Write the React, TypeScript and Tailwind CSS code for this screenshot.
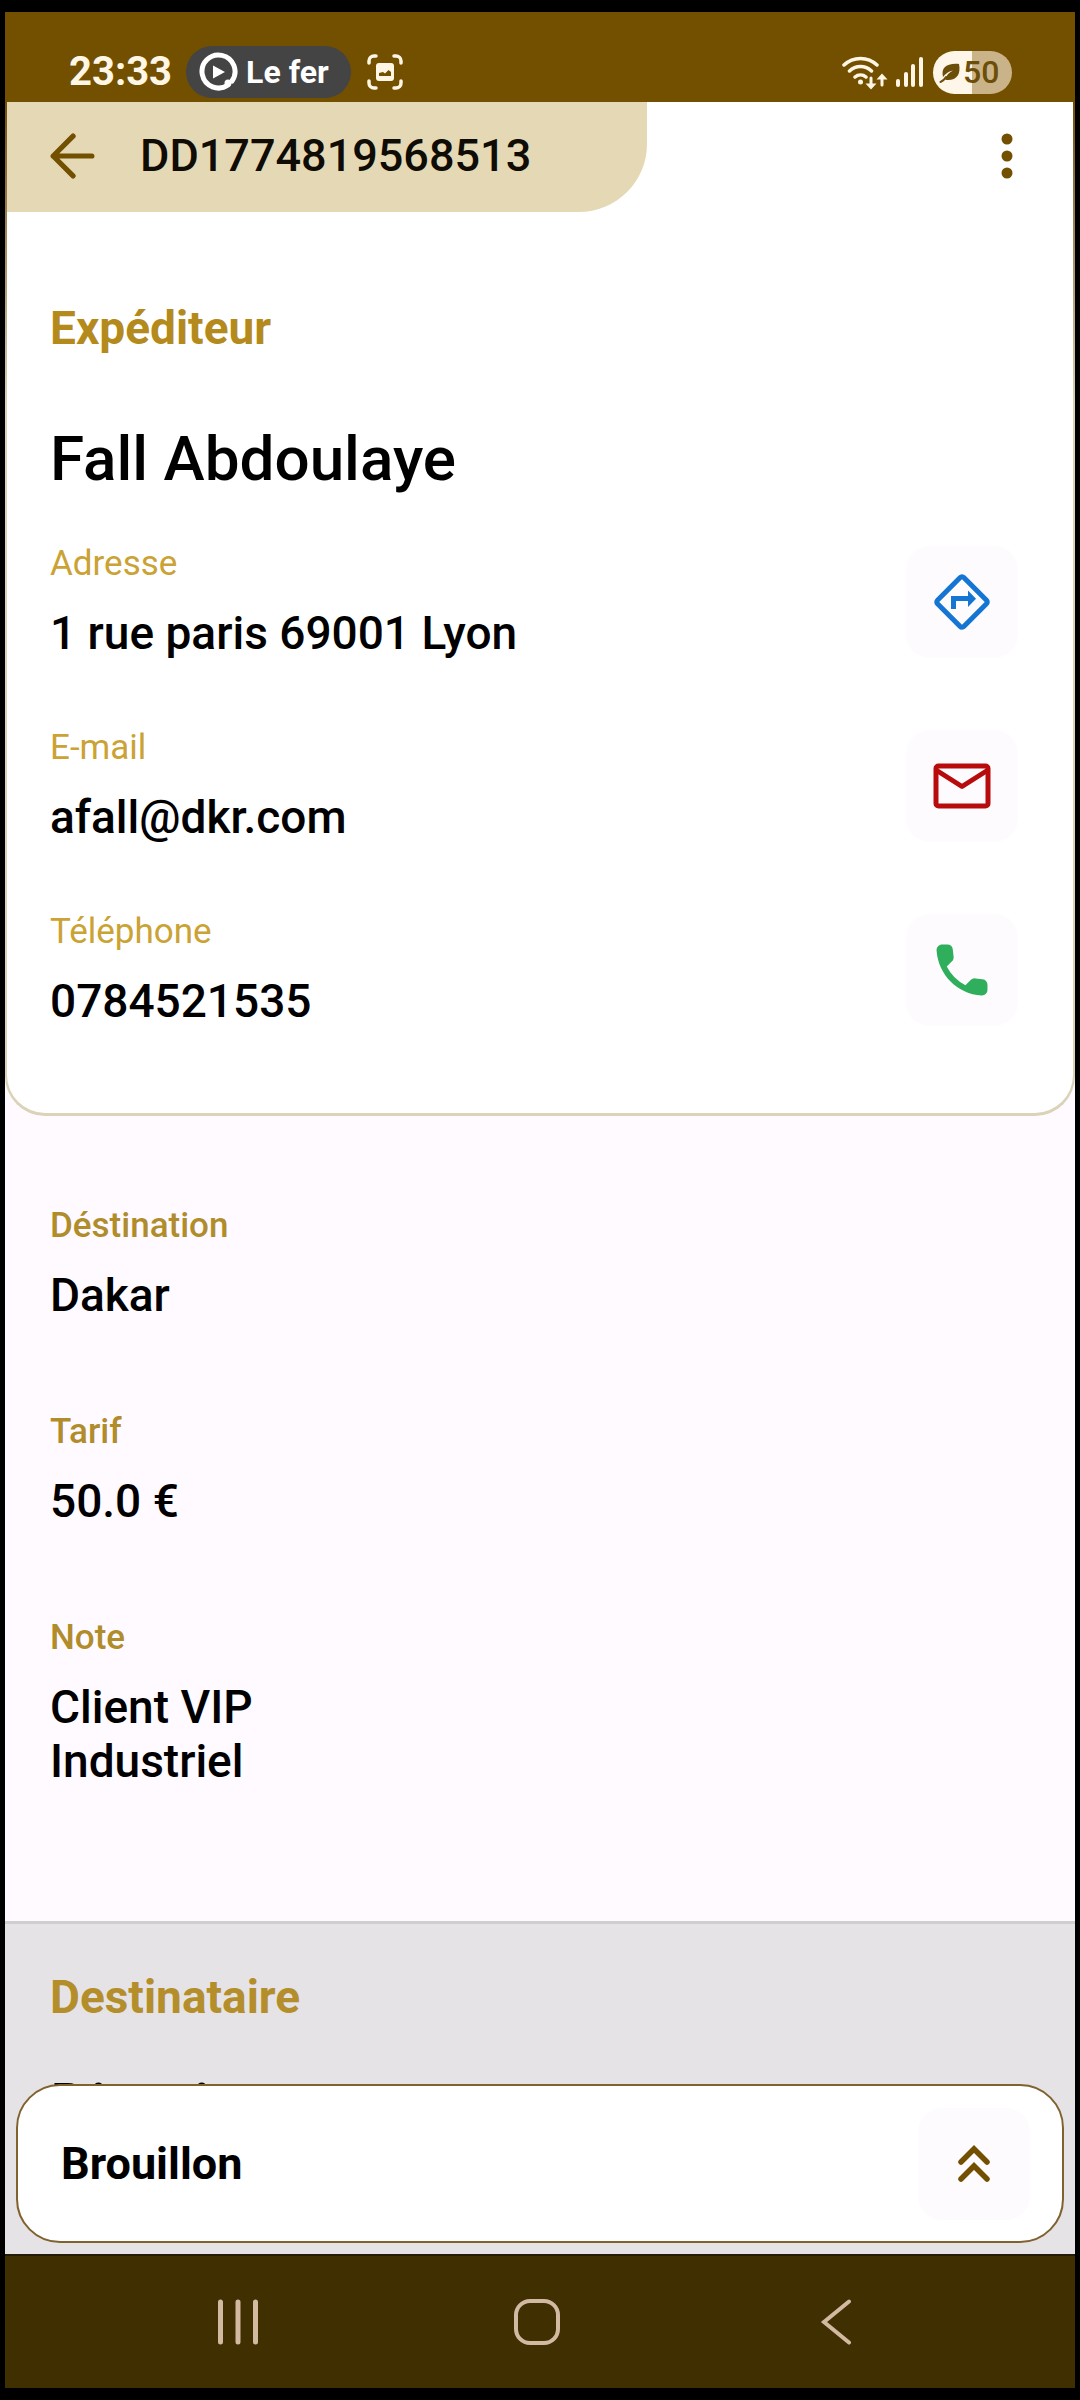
import { ReactNode, useState } from "react";

interface Contact {
  label: string;
  value: string;
  action: string;
  href: string;
  icon: ReactNode;
}

interface Detail {
  label: string;
  value: string;
}

function DirectionsIcon() {
  return (
    <svg viewBox="0 0 58 58" className="size-[58px] text-[#1476d2]" fill="none" stroke="currentColor" strokeWidth="5" strokeLinejoin="round">
      <path d="M27.200 4.500a2.500 2.500 0 0 1 3.600 0L53.500 27.200a2.500 2.500 0 0 1 0 3.600L30.800 53.500a2.500 2.500 0 0 1-3.600 0L4.500 30.800a2.500 2.500 0 0 1 0-3.600z" />
      <path d="M18 36V23h17v-5.500l8 8.200-8 8.300v-6H23v8z" fill="currentColor" stroke="none" />
    </svg>
  );
}

function MailIcon() {
  return (
    <svg viewBox="0 0 58 46" className="h-[46px] w-[58px] text-[#b80c0c]" fill="none" stroke="currentColor" strokeWidth="5" strokeLinejoin="round">
      <rect x="3" y="3" width="52" height="40" rx="2.500" />
      <path d="M3 7l26 16.500L55 7" />
    </svg>
  );
}

function PhoneIcon() {
  return (
    <svg viewBox="0 0 24 24" className="size-[68px] text-[#2fae5b]" fill="currentColor">
      <path d="M19.230 15.260l-2.540-.29a1.990 1.990 0 0 0-1.640.57l-1.840 1.840a15.045 15.045 0 0 1-6.590-6.590l1.850-1.850c.43-.43.64-1.030.57-1.640l-.29-2.520a2.001 2.001 0 0 0-1.990-1.770H5.030c-1.130 0-2.070.94-2 2.070.53 8.540 7.360 15.360 15.890 15.890 1.130.07 2.070-.87 2.070-2v-1.730c.01-1.010-.75-1.860-1.760-1.980z" />
    </svg>
  );
}

const contacts: Contact[] = [
  {
    label: "Adresse",
    value: "1 rue paris 69001 Lyon",
    action: "Itinéraire",
    href: "#itineraire",
    icon: <DirectionsIcon />,
  },
  {
    label: "E-mail",
    value: "afall@dkr.com",
    action: "Envoyer un e-mail",
    href: "mailto:afall@dkr.com",
    icon: <MailIcon />,
  },
  {
    label: "Téléphone",
    value: "0784521535",
    action: "Appeler",
    href: "tel:0784521535",
    icon: <PhoneIcon />,
  },
];

const details: Detail[] = [
  { label: "Déstination", value: "Dakar" },
  { label: "Tarif", value: "50.0 €" },
  { label: "Note", value: "Client VIP\nIndustriel" },
];

function StatusBar() {
  return (
    <div className="flex h-[90px] shrink-0 items-center justify-between bg-[#735000] pt-[30px] pr-[63px] pl-16 text-[#fff6e6]">
      <div className="flex items-center">
        <span className="text-[40px] leading-none font-bold">23:33</span>
        <div className="ml-[14px] flex h-[52px] items-center gap-2 rounded-full bg-[#444444] pr-[22px] pl-3 text-white">
          <svg viewBox="0 0 40 40" className="size-10" fill="none">
            <path d="M30 33a16.500 16.500 0 1 1 4-4" stroke="currentColor" strokeWidth="5" strokeLinecap="round" />
            <path d="M15 13.500l12 6.500-12 6.500z" fill="currentColor" />
            <circle cx="30" cy="31" r="3.500" fill="currentColor" />
          </svg>
          <span className="text-[32px] leading-none font-bold">Le fer</span>
        </div>
        <svg viewBox="0 0 36 36" className="ml-4 size-9" fill="none" stroke="currentColor" strokeWidth="3.500" strokeLinecap="round">
          <path d="M2 9V7a5 5 0 0 1 5-5h2M27 2h2a5 5 0 0 1 5 5v2M34 27v2a5 5 0 0 1-5 5h-2M9 34H7a5 5 0 0 1-5-5v-2" />
          <rect x="9" y="9" width="18" height="18" rx="3" fill="currentColor" stroke="none" />
          <path d="M12 22v-3l4-1 2 1.500 3.500-3.500 2.500 2v4z" fill="#735000" stroke="none" />
        </svg>
      </div>
      <div className="flex items-center">
        <svg viewBox="0 0 46 36" className="h-9 w-[46px]" fill="none" stroke="currentColor" strokeWidth="3.500" strokeLinecap="round">
          <path d="M2 11a24 24 0 0 1 33 0M7.500 17a16 16 0 0 1 22 0M13 23a8.500 8.500 0 0 1 11 0" />
          <circle cx="18.500" cy="28" r="2.500" fill="currentColor" stroke="none" />
          <path d="M29 24v7M40 31v-8" strokeWidth="3" />
          <path d="M23.500 29.500h11l-5.500 6zM34.500 25.500h11l-5.500-6z" fill="currentColor" stroke="none" />
        </svg>
        <svg viewBox="0 0 27 30" className="ml-2 h-[30px] w-[27px]" fill="currentColor">
          <rect x="0" y="22" width="4" height="8" rx="2" />
          <rect x="8" y="15" width="4" height="15" rx="2" />
          <rect x="15" y="7" width="4" height="23" rx="2" />
          <rect x="23" y="0" width="4" height="30" rx="2" />
        </svg>
        <div className="ml-[10px] flex h-[43px] w-[79px] items-center rounded-full bg-linear-to-r from-[#fff6ea] from-50% to-[#cbb389] to-50% pl-[6px] text-[#6b4e08]">
          <svg viewBox="0 0 24 24" className="size-6" fill="currentColor">
            <path d="M4 17C2 8 7 3 20 4c2 10-2 16-11 16-1 0-2 0-3-.5 1-4 4-7 8-9-5 1-7.500 3.500-10 6.500z" />
            <path d="M1.500 22c3-1 4-2.500 5.500-5" stroke="currentColor" strokeWidth="2" fill="none" strokeLinecap="round" />
          </svg>
          <span className="text-[32px] leading-none font-medium">50</span>
        </div>
      </div>
    </div>
  );
}

function Header({ reference }: { reference: string }) {
  return (
    <header className="flex items-stretch justify-between">
      <div className="flex h-[110px] w-[60%] items-center rounded-br-[68px] bg-[#e5d8b4] pb-[3px] pl-[42px]">
        <button type="button" aria-label="Retour" className="text-[#735000]">
          <svg viewBox="0 0 44 44" className="size-[46px]" fill="none" stroke="currentColor" strokeWidth="5" strokeLinecap="round" strokeLinejoin="round">
            <path d="M23 3L4 22l19 19M4 22h37" />
          </svg>
        </button>
        <h1 className="ml-[45px] text-[45px] leading-none font-medium text-[#0f0b05]">{reference}</h1>
      </div>
      <button type="button" aria-label="Plus d'options" className="mr-[42px] text-[#735000]">
        <svg viewBox="0 0 48 48" className="size-12" fill="currentColor">
          <circle cx="24" cy="6" r="5.500" />
          <circle cx="24" cy="23" r="5.500" />
          <circle cx="24" cy="40" r="5.500" />
        </svg>
      </button>
    </header>
  );
}

function ContactRow({ contact }: { contact: Contact }) {
  return (
    <li className="flex h-[112px] items-center justify-between">
      <dl>
        <dt className="text-[35px] leading-10 text-[#cba234]">{contact.label}</dt>
        <dd className="mt-[22px] text-[46px] leading-[54px] font-medium">{contact.value}</dd>
      </dl>
      <a
        href={contact.href}
        aria-label={contact.action}
        className="flex size-28 items-center justify-center rounded-3xl bg-[#fefbff]"
      >
        {contact.icon}
      </a>
    </li>
  );
}

function NavigationBar() {
  return (
    <nav className="flex h-[134px] shrink-0 items-center justify-between border-t-2 border-[#241c08] bg-[#402f00] pr-[216px] pl-[210px] text-[#d1b9a2]">
      <button type="button" aria-label="Applications récentes">
        <svg viewBox="0 0 46 46" className="size-[46px]" fill="none" stroke="currentColor" strokeWidth="5" strokeLinecap="round">
          <path d="M5.500 3v40M23 3v40M40.500 3v40" />
        </svg>
      </button>
      <button type="button" aria-label="Accueil">
        <svg viewBox="0 0 46 46" className="size-[46px]" fill="none" stroke="currentColor" strokeWidth="4">
          <rect x="2" y="2" width="42" height="42" rx="14" />
        </svg>
      </button>
      <button type="button" aria-label="Précédent">
        <svg viewBox="0 0 46 46" className="size-[46px]" fill="none" stroke="currentColor" strokeWidth="4" strokeLinecap="round">
          <path d="M36 2.500L11 23l25 20.500" />
        </svg>
      </button>
    </nav>
  );
}

export default function App() {
  const [isOpen, setIsOpen] = useState(false);

  return (
    <div className="h-screen bg-black px-[5px] py-3 font-[Roboto,sans-serif] text-black">
      <div className="flex h-full flex-col">
        <StatusBar />

        <main className="relative flex min-h-0 flex-1 flex-col overflow-hidden bg-[#fefaff]">
          <section className="shrink-0 rounded-b-[40px] bg-linear-to-b from-[#735000] to-[#dad3b8] to-30% px-[2px] pb-[3px]">
            <div className="rounded-b-[38px] bg-white pb-[87px]">
              <Header reference="DD1774819568513" />
              <div className="pr-[55px] pl-[43px]">
                <h2 className="mt-[90px] text-[46px] leading-[52px] font-bold text-[#b48a1d]">Expéditeur</h2>
                <p className="mt-[69px] text-[62px] leading-[72px] font-medium">Fall Abdoulaye</p>
                <ul className="mt-[51px] flex flex-col gap-[72px]">
                  {contacts.map(contact => (
                    <ContactRow key={contact.label} contact={contact} />
                  ))}
                </ul>
              </div>
            </div>
          </section>

          <section className="shrink-0 px-[45px] pt-[90px] pb-[133px]">
            <dl className="flex flex-col gap-[90px]">
              {details.map(detail => (
                <div key={detail.label}>
                  <dt className="text-[35px] leading-10 font-medium text-[#b08c2b]">{detail.label}</dt>
                  <dd className="mt-[22px] text-[46px] leading-[54px] font-medium whitespace-pre-line">
                    {detail.value}
                  </dd>
                </div>
              ))}
            </dl>
          </section>

          <section className="flex-1 border-t-[3px] border-[#cfcfcf] bg-[#e6e3e6] px-[45px] pt-[47px]">
            <h2 className="text-[46px] leading-[52px] font-bold text-[#b48e2a]">Destinataire</h2>
            <p className="mt-[47px] text-[62px] leading-[72px] font-medium">Diami</p>
          </section>

          <div className="absolute inset-x-[11px] bottom-[11px] flex h-[159px] items-center justify-between rounded-[44px] border-2 border-[#80622f] bg-white pr-8 pl-[43px]">
            <span className="text-[45px] leading-[52px] font-bold">Brouillon</span>
            <button
              type="button"
              aria-label="Changer le statut"
              aria-expanded={isOpen}
              onClick={() => setIsOpen(!isOpen)}
              className="flex size-28 items-center justify-center rounded-3xl bg-[#fefbff] text-[#735000]"
            >
              <svg viewBox="0 0 36 40" className="h-10 w-9" fill="none" stroke="currentColor" strokeWidth="5.500" strokeLinecap="round">
                <path d="M5 18L18 5l13 13M5 35l13-13 13 13" />
              </svg>
            </button>
          </div>
        </main>

        <NavigationBar />
      </div>
    </div>
  );
}
